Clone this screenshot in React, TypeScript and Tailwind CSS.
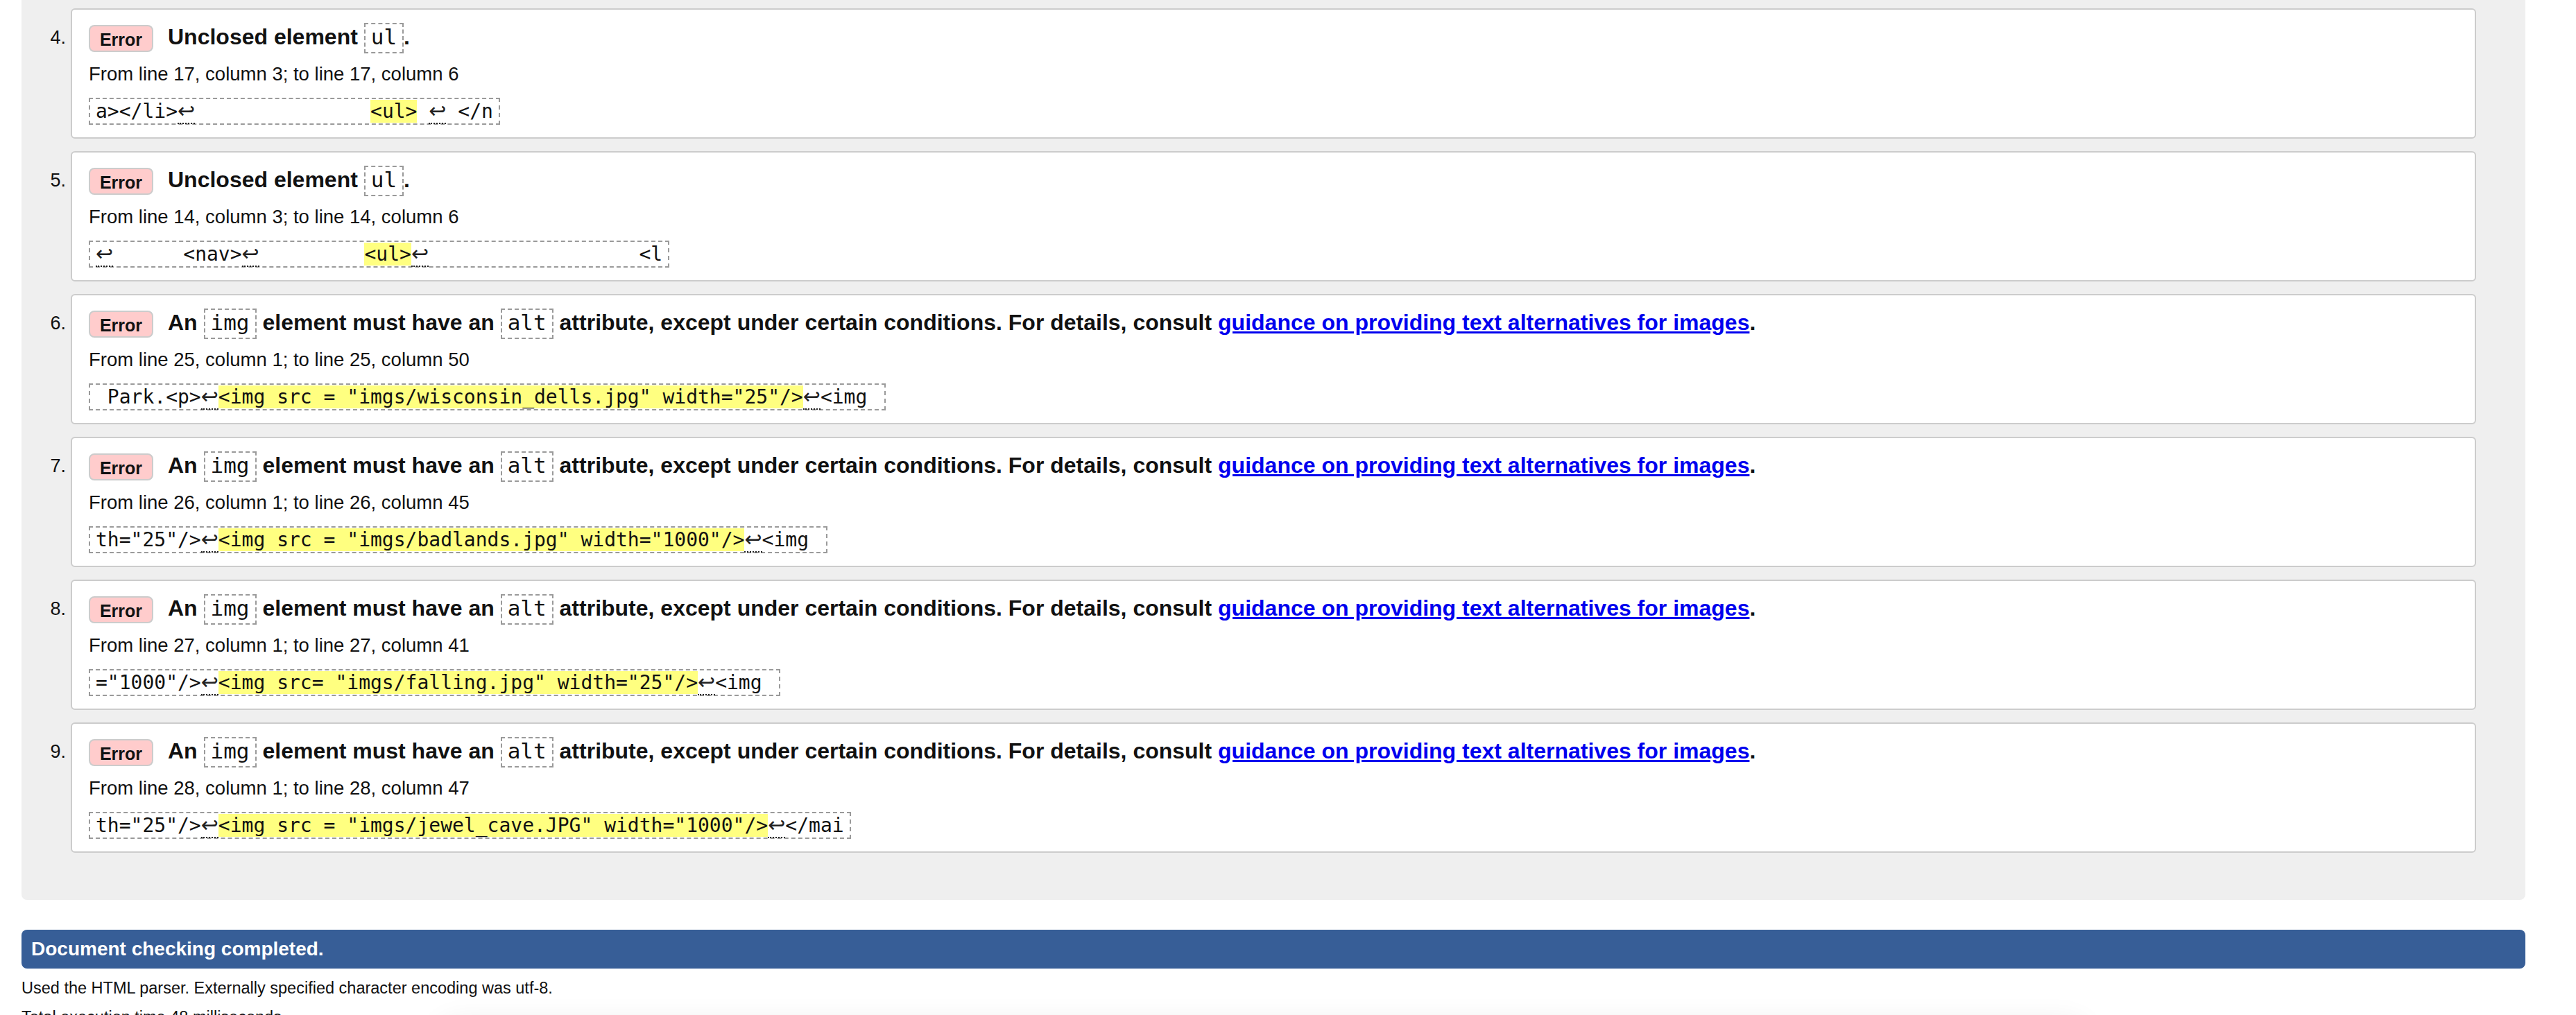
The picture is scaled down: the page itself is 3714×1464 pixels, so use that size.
import React from "react";

type Seg = { t: string; k?: "hl" | "nl" };

const NL: Seg = { t: "", k: "nl" };

const cards: {
  n: number;
  kind: "ul" | "img";
  loc: string;
  code: Seg[];
}[] = [
  {
    n: 4,
    kind: "ul",
    loc: "From line 17, column 3; to line 17, column 6",
    code: [
      { t: "a></li>" },
      NL,
      { t: "               " },
      { t: "<ul>", k: "hl" },
      { t: " " },
      NL,
      { t: " </n" },
    ],
  },
  {
    n: 5,
    kind: "ul",
    loc: "From line 14, column 3; to line 14, column 6",
    code: [
      NL,
      { t: "      <nav>" },
      NL,
      { t: "         " },
      { t: "<ul>", k: "hl" },
      NL,
      { t: "                  <l" },
    ],
  },
  {
    n: 6,
    kind: "img",
    loc: "From line 25, column 1; to line 25, column 50",
    code: [
      { t: " Park.<p>" },
      NL,
      { t: '<img src = "imgs/wisconsin_dells.jpg" width="25"/>', k: "hl" },
      NL,
      { t: "<img " },
    ],
  },
  {
    n: 7,
    kind: "img",
    loc: "From line 26, column 1; to line 26, column 45",
    code: [
      { t: 'th="25"/>' },
      NL,
      { t: '<img src = "imgs/badlands.jpg" width="1000"/>', k: "hl" },
      NL,
      { t: "<img " },
    ],
  },
  {
    n: 8,
    kind: "img",
    loc: "From line 27, column 1; to line 27, column 41",
    code: [
      { t: '="1000"/>' },
      NL,
      { t: '<img src= "imgs/falling.jpg" width="25"/>', k: "hl" },
      NL,
      { t: "<img " },
    ],
  },
  {
    n: 9,
    kind: "img",
    loc: "From line 28, column 1; to line 28, column 47",
    code: [
      { t: 'th="25"/>' },
      NL,
      { t: '<img src = "imgs/jewel_cave.JPG" width="1000"/>', k: "hl" },
      NL,
      { t: "</mai" },
    ],
  },
];

function Chip({ children }: { children: React.ReactNode }) {
  return (
    <code className="inline-block border-2 border-dashed border-[#9a9a9a] px-[8px] pt-0 pb-[4px] leading-[36px] text-[31px] font-normal text-[#111] font-['DejaVu_Sans_Mono',monospace]">
      {children}
    </code>
  );
}

function Heading({ kind }: { kind: "ul" | "img" }) {
  if (kind === "ul") {
    return (
      <>
        Unclosed element <Chip>ul</Chip>.
      </>
    );
  }
  return (
    <>
      An <Chip>img</Chip> element must have an <Chip>alt</Chip> attribute,
      except under certain conditions. For details, consult{" "}
      <a className="text-[#0000ee] underline" href="#">
        guidance on providing text alternatives for images
      </a>
      .
    </>
  );
}

function Code({ segs }: { segs: Seg[] }) {
  return (
    <div className="block w-fit h-[39px] border-2 border-dashed border-[#9a9a9a] px-[8px] leading-[35px] text-[28px] text-[#111] whitespace-pre font-['DejaVu_Sans_Mono',monospace]">
      {segs.map((s, i) => {
        if (s.k === "nl") {
          return (
            <span
              key={i}
              className="text-[30px] leading-none border-b-2 border-dotted border-[#222] text-[#222] font-['DejaVu_Sans',sans-serif]"
            >
              ↩
            </span>
          );
        }
        if (s.k === "hl") {
          return (
            <span key={i} className="bg-[#ffff80]">
              {s.t}
            </span>
          );
        }
        return <span key={i}>{s.t}</span>;
      })}
    </div>
  );
}

export default function App() {
  return (
    <div className="relative h-[1464px] overflow-hidden bg-white text-[#111] font-['Liberation_Sans',Arial,sans-serif]">
      <div className="ml-[31px] mr-[73px] bg-[#efefef] pt-[12px] pb-[68px] pr-[71px] rounded-b-[8px]">
        <div className="flex flex-col gap-[18px]">
          {cards.map((c) => (
            <div key={c.n} className="flex">
              <div className="w-[71px] shrink-0 pr-[7px] pt-[27px] text-right text-[27px] leading-[31px]">
                {c.n}.
              </div>
              <div className="flex-1 min-w-0 h-[188px] border-2 border-[#cccccc] rounded-[6px] bg-white pt-[19px] px-[24px]">
                <div className="flex items-center h-[44px]">
                  <span className="block shrink-0 w-[93px] h-[39px] border-2 border-[#cccccc] bg-[#ffcccc] rounded-[8px] pt-[3px] text-center text-[25px] leading-[32px] font-bold">
                    Error
                  </span>
                  <div className="ml-[21px] whitespace-nowrap text-[32px] leading-[37px] font-bold">
                    <Heading kind={c.kind} />
                  </div>
                </div>
                <p className="mt-[14px] text-[27.5px] leading-[31px]">{c.loc}</p>
                <div className="mt-[19px]">
                  <Code segs={c.code} />
                </div>
              </div>
            </div>
          ))}
        </div>
      </div>

      <div className="mt-[43px] ml-[31px] mr-[73px] h-[56px] flex items-center pl-[14px] bg-[#375e97] rounded-[8px] text-white text-[28px] font-bold">
        Document checking completed.
      </div>

      <p className="ml-[31px] mt-[14px] text-[23.5px] leading-[28px]">
        Used the HTML parser. Externally specified character encoding was utf-8.
      </p>
      <p className="ml-[31px] mt-[14px] text-[23.5px] leading-[28px]">
        Total execution time 48 milliseconds.
      </p>

      <div className="absolute left-[640px] top-[1482px] w-[2360px] h-[120px] rounded-[20px] bg-white shadow-[0_0_40px_10px_rgba(0,0,0,0.07)]" />
    </div>
  );
}
